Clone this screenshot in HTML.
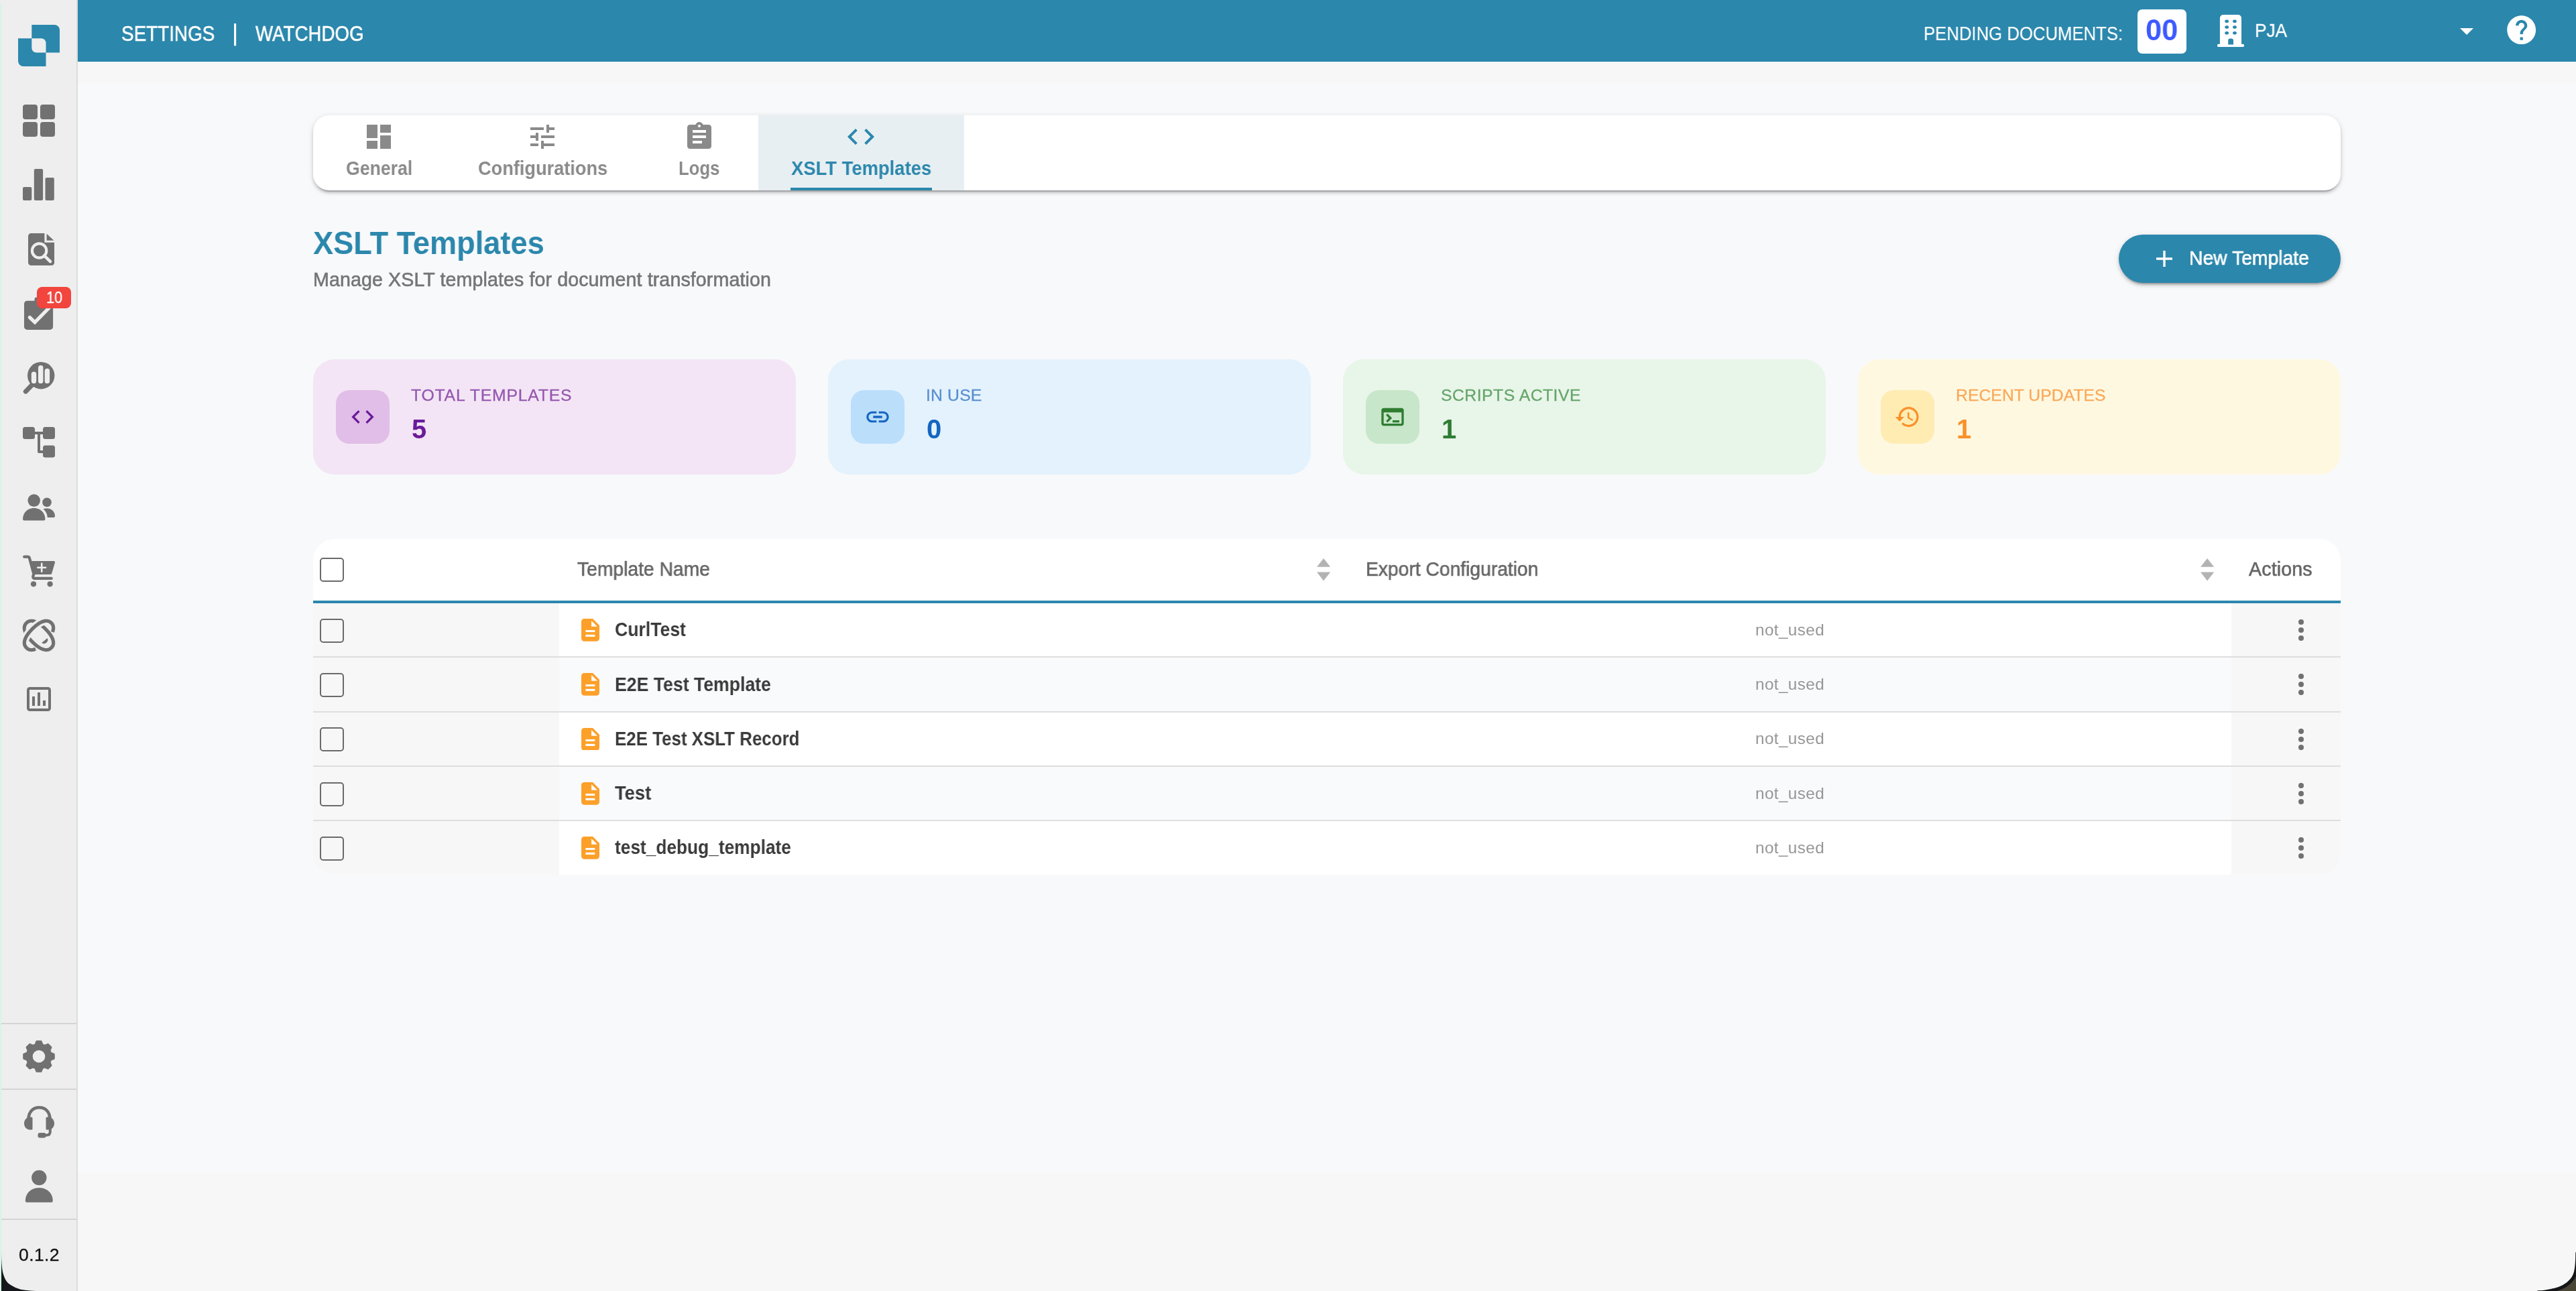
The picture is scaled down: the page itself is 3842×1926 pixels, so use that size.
<!DOCTYPE html>
<html lang="en"><head><meta charset="utf-8"><title>Watchdog - XSLT Templates</title>
<style>
html,body{margin:0;padding:0}
body{width:3842px;height:1926px;position:relative;overflow:hidden;background:#f8f9fb;
font-family:"Liberation Sans",sans-serif;}
.b{position:absolute;display:block}
.t{position:absolute;white-space:nowrap;line-height:1;will-change:transform;}
</style></head><body>

<div class="b" style="left:116px;top:1750px;width:3726px;height:176px;background:#f7f7f7"></div>
<div class="b" style="left:116px;top:92px;width:3726px;height:32px;background:#f7f7f7"></div>
<div class="b" style="left:0px;top:0px;width:116px;height:1926px;background:#eeeeee"></div>
<div class="b" style="left:114px;top:0px;width:2px;height:1926px;background:#dcdcdc"></div>
<div class="b" style="left:0px;top:5px;width:2px;height:1921px;background:#d6f5e6"></div>
<div class="b" style="left:116px;top:0px;width:3726px;height:92px;background:#2b87ac"></div>
<div class="b" style="left:116px;top:91px;width:3726px;height:1px;background:#227ea4"></div>
<div class="b" style="left:116px;top:92px;width:3726px;height:1px;background:#fcfcfc"></div>
<div class="t" style="left:181.20px;top:35px;font-size:31px;color:#fff;-webkit-text-stroke:0.55px currentColor;transform-origin:0 50%;transform:scaleX(0.8987);">SETTINGS</div>
<div class="t" style="left:345.8px;top:31px;font-size:35.2px;color:#fff;-webkit-text-stroke:0.25px currentColor;">|</div>
<div class="t" style="left:380.80px;top:35px;font-size:31px;color:#fff;-webkit-text-stroke:0.55px currentColor;transform-origin:0 50%;transform:scaleX(0.8935);">WATCHDOG</div>
<div class="t" style="left:2869.00px;top:36px;font-size:29px;color:#fff;-webkit-text-stroke:0.15px currentColor;transform-origin:0 50%;transform:scaleX(0.8868);">PENDING DOCUMENTS:</div>
<div class="b" style="left:3188px;top:14px;width:73px;height:66px;background:#fff;border-radius:7px"></div>
<div class="t" style="left:3200.00px;top:23px;font-size:44px;color:#3d5afe;font-weight:700;transform-origin:0 50%;transform:scaleX(0.9857);">00</div>
<div class="t" style="left:3363.00px;top:31px;font-size:28.5px;color:#fff;-webkit-text-stroke:0.3px currentColor;transform-origin:0 50%;transform:scaleX(0.9187);">PJA</div>
<svg class="b" style="left:3307px;top:22px;" width="40" height="48" viewBox="0 0 40 48"><path fill="#fff" d="M9 0h22a5 5 0 0 1 5 5v38.800h2a2.100 2.100 0 0 1 0 4.200h-36a2.100 2.100 0 0 1 0-4.200H3.900V5a5 5 0 0 1 5-5z"/><rect x="11.2" y="7.4" width="5.900" height="4.600" rx="2.300" fill="#2b87ac"/><rect x="11.2" y="16.2" width="5.900" height="4.600" rx="2.300" fill="#2b87ac"/><rect x="11.2" y="25" width="5.900" height="4.600" rx="2.300" fill="#2b87ac"/><rect x="23" y="7.4" width="5.900" height="4.600" rx="2.300" fill="#2b87ac"/><rect x="23" y="16.2" width="5.900" height="4.600" rx="2.300" fill="#2b87ac"/><rect x="23" y="25" width="5.900" height="4.600" rx="2.300" fill="#2b87ac"/><path fill="#2b87ac" d="M16.200 44.600v-6a3.200 3.200 0 0 1 3.200-3.200h1.400a3.200 3.200 0 0 1 3.200 3.200v6z"/></svg>
<svg class="b" style="left:3668.5px;top:41.8px;" width="20" height="10" viewBox="0 0 20 10"><path fill="#fff" d="M0 0h20L10 10z"/></svg>
<svg class="b" style="left:3734.6px;top:19.1px;" width="51.4" height="51.4" viewBox="0 0 24 24"><path fill="#fff" d="M12 2C6.48 2 2 6.48 2 12s4.48 10 10 10 10-4.48 10-10S17.52 2 12 2zm1 17h-2v-2h2v2zm2.07-7.75l-.9.92C13.45 12.9 13 13.5 13 15h-2v-.5c0-1.1.45-2.1 1.17-2.83l1.24-1.26c.37-.36.59-.86.59-1.41 0-1.1-.9-2-2-2s-2 .9-2 2H8c0-2.21 1.79-4 4-4s4 1.79 4 4c0 .88-.36 1.68-.93 2.25z"/></svg>
<svg class="b" style="left:27px;top:37px;" width="62" height="62" viewBox="0 0 62 62"><path fill="#2b87ac" d="M20.3 0H54a8 8 0 0 1 8 8v33.5H20.3z"/><path fill="#2b87ac" d="M0 20.3h41.5V62H8a8 8 0 0 1-8-8z"/><path fill="#eeeeee" d="M20.3 20.3H34.5a7 7 0 0 1 7 7v14.2H27.3a7 7 0 0 1-7-7z"/></svg>
<svg class="b" style="left:34px;top:156px;" width="48" height="48" viewBox="0 0 48 48"><rect x="0" y="0" width="22" height="22" rx="4" fill="#717171"/><rect x="0" y="26" width="22" height="22" rx="4" fill="#717171"/><rect x="26" y="0" width="22" height="22" rx="4" fill="#717171"/><rect x="26" y="26" width="22" height="22" rx="4" fill="#717171"/></svg>
<svg class="b" style="left:34px;top:252px;" width="47" height="47" viewBox="0 0 47 47"><rect x="0" y="27" width="13.3" height="20" rx="2" fill="#717171"/><rect x="16.8" y="0" width="13.3" height="47" rx="2" fill="#717171"/><rect x="33.5" y="13" width="13.3" height="34" rx="2" fill="#717171"/></svg>
<svg class="b" style="left:41.8px;top:348px;" width="39.4" height="48" viewBox="0 0 39.400 48"><path fill="#717171" d="M4.500 0H24.400V13.800H39.200V43.500a4.500 4.500 0 0 1-4.500 4.500H4.500a4.500 4.500 0 0 1-4.500-4.500V4.500a4.500 4.500 0 0 1 4.500-4.500z"/><path fill="#717171" d="M27.600 0.700L38.300 10.700H27.600z"/><circle cx="16.600" cy="26" r="10.700" fill="none" stroke="#eeeeee" stroke-width="4.200"/><path d="M24 33.400L33 42.200" stroke="#eeeeee" stroke-width="4.600" stroke-linecap="round"/></svg>
<svg class="b" style="left:36.2px;top:440px;" width="44" height="52" viewBox="0 0 44 52"><rect x="0" y="8.800" width="43.100" height="43.100" rx="4.500" fill="#717171"/><rect x="15.500" y="3.500" width="12.100" height="10" rx="3" fill="#717171"/><path d="M8.300 33.500L16 40.800L37.400 19" fill="none" stroke="#eeeeee" stroke-width="5.200" stroke-linecap="round" stroke-linejoin="miter"/></svg>
<div class="b" style="left:55px;top:428px;width:51px;height:32px;background:#f1453d;border-radius:8px"></div>
<div class="t" style="left:68.80px;top:432px;font-size:24px;color:#fff;-webkit-text-stroke:0.3px currentColor;transform-origin:0 50%;transform:scaleX(0.9047);">10</div>
<svg class="b" style="left:32px;top:538px;" width="52" height="52" viewBox="0 0 52 52"><circle cx="29.200" cy="22.200" r="20.200" fill="#717171"/><path d="M16 36L6.300 46.100" stroke="#717171" stroke-width="7" stroke-linecap="round"/><rect x="14.800" y="16.500" width="7.400" height="17.600" rx="3.700" fill="#eeeeee"/><rect x="25" y="6.900" width="7.400" height="27.200" rx="3.700" fill="#eeeeee"/><rect x="34.700" y="11.800" width="7.400" height="22.300" rx="3.700" fill="#eeeeee"/></svg>
<svg class="b" style="left:34px;top:637.4px;" width="48" height="46" viewBox="0 0 48 46"><rect x="0" y="0" width="18" height="18" rx="3.5" fill="#717171"/><rect x="30" y="0" width="18" height="18" rx="3.5" fill="#717171"/><rect x="30" y="27.6" width="18" height="18" rx="3.5" fill="#717171"/><path d="M16 9H32M24 9V37H32" fill="none" stroke="#717171" stroke-width="4" stroke-linejoin="round"/></svg>
<svg class="b" style="left:34px;top:736.5px;" width="48" height="40" viewBox="0 0 48 40"><circle cx="16.7" cy="9.6" r="9.3" fill="#717171"/><circle cx="36" cy="12.4" r="6.8" fill="#717171"/><path fill="#717171" d="M0 37.5C0 28 7 21 16.7 21S33.4 28 33.4 37.5a2 2 0 0 1-2 2H2a2 2 0 0 1-2-2z"/><path fill="#717171" d="M30.5 22.6C32 21.9 34 21.6 36 21.6C43 21.6 48 26.5 48 33a2 2 0 0 1-2 2H36.8C36.6 30 34.3 25.6 30.5 22.6z"/></svg>
<svg class="b" style="left:34px;top:828px;" width="49" height="48" viewBox="0 0 49 48"><path fill="none" stroke="#717171" stroke-width="4.200" stroke-linecap="round" stroke-linejoin="round" d="M2.200 2.700H7.600C8.800 2.700 9.600 3.400 10 4.800L16.400 28.500L15.300 31.500C14.800 33.400 15.800 34.900 17.800 34.900H42.700"/><path fill="#717171" d="M11.500 9.100H46.200C47.600 9.100 48.300 10.200 47.900 11.500L43.300 27.300C43 28.400 42.300 28.900 41.200 28.900H16.500z"/><circle cx="16" cy="43.300" r="4.100" fill="#717171"/><circle cx="40.600" cy="43.300" r="4.100" fill="#717171"/><path d="M28.200 12.900V24.700M22.300 18.800H34.100" stroke="#eeeeee" stroke-width="2.600" stroke-linecap="round"/></svg>
<svg class="b" style="left:34px;top:924px;overflow:visible;" width="48" height="48" viewBox="0 0 48 48"><path fill="#717171" d="M28.200 35.100L36.600 27.900A5.700 5.700 0 0 1 28.200 35.100z"/><path d="M42.53 42.43L41.99 42.94L41.53 43.34L41.08 43.70L40.63 44.01L40.17 44.29L39.70 44.55L39.23 44.77L38.74 44.96L38.25 45.12L37.74 45.26L37.22 45.37L36.69 45.46L36.16 45.51L35.61 45.54L35.05 45.55L34.48 45.53L33.90 45.48L33.31 45.41L32.71 45.31L32.10 45.19L31.48 45.04L30.85 44.87L30.22 44.67L29.58 44.45L28.93 44.20L28.28 43.93L27.61 43.63L26.95 43.31L26.27 42.96L25.59 42.59L24.91 42.19L24.21 41.77L23.52 41.33L22.82 40.86L22.11 40.37L21.40 39.85L20.68 39.30L19.96 38.73L19.22 38.13L18.48 37.50L17.73 36.84L16.96 36.14L16.16 35.40L15.32 34.58L14.31 33.59L13.32 32.58L12.50 31.74L11.76 30.94L11.06 30.17L10.40 29.42L9.77 28.68L9.17 27.94L8.60 27.22L8.05 26.50L7.53 25.79L7.04 25.08L6.57 24.38L6.13 23.69L5.71 22.99L5.31 22.31L4.94 21.63L4.59 20.95L4.27 20.29L3.97 19.62L3.70 18.97L3.45 18.32L3.23 17.68L3.03 17.05L2.86 16.42L2.71 15.80L2.59 15.19L2.49 14.59L2.42 14.00L2.37 13.42L2.35 12.85L2.36 12.29L2.39 11.74L2.44 11.21L2.53 10.68L2.64 10.16L2.78 9.65L2.94 9.16L3.13 8.67L3.35 8.20L3.61 7.73L3.89 7.27L4.20 6.82L4.56 6.37L4.96 5.91L5.47 5.37L6.01 4.86L6.47 4.46L6.92 4.10L7.37 3.79L7.83 3.51L8.30 3.25L8.77 3.03L9.26 2.84L9.75 2.68L10.26 2.54L10.78 2.43L11.31 2.34L11.84 2.29L12.39 2.26L12.95 2.25L13.52 2.27L14.10 2.32L14.69 2.39L15.29 2.49L15.90 2.61L16.52 2.76L17.15 2.93L17.78 3.13L18.42 3.35L19.07 3.60L19.72 3.87L20.39 4.17L21.05 4.49L21.73 4.84L22.41 5.21L23.09 5.61L23.79 6.03L24.48 6.47L25.18 6.94L25.89 7.43L26.60 7.95L27.32 8.50L28.04 9.07L28.78 9.67L29.52 10.30L30.27 10.96L31.04 11.66L31.84 12.40L32.68 13.22L33.69 14.21L34.68 15.22L35.50 16.06L36.24 16.86L36.94 17.63L37.60 18.38L38.23 19.12L38.83 19.86L39.40 20.58L39.95 21.30L40.47 22.01L40.96 22.72L41.43 23.42L41.87 24.11L42.29 24.81L42.69 25.49L43.06 26.17L43.41 26.85L43.73 27.51L44.03 28.18L44.30 28.83L44.55 29.48L44.77 30.12L44.97 30.75L45.14 31.38L45.29 32.00L45.41 32.61L45.51 33.21L45.58 33.80L45.63 34.38L45.65 34.95L45.64 35.51L45.61 36.06L45.56 36.59L45.47 37.12L45.36 37.64L45.22 38.15L45.06 38.64L44.87 39.13L44.65 39.60L44.39 40.07L44.11 40.53L43.80 40.98L43.44 41.43L43.04 41.89L42.53 42.43z" fill="none" stroke="#717171" stroke-width="5.200"/><path d="M35.61 2.26L35.22 2.25L34.83 2.25L34.44 2.27L34.04 2.30L33.63 2.35L33.23 2.40L32.81 2.47L32.40 2.55L31.97 2.64L31.55 2.74L31.12 2.86L30.69 2.98L30.25 3.12L29.81 3.27L29.36 3.43L28.92 3.61L28.47 3.79L28.01 3.99L27.55 4.20L27.09 4.42L26.63 4.65L26.17 4.90L25.70 5.15L25.23 5.42L24.75 5.70L24.28 5.99L23.80 6.29L23.32 6.60L22.83 6.93L22.35 7.27L21.86 7.62L21.37 7.98L20.87 8.35L20.38 8.74L19.88 9.14L19.37 9.55L18.86 9.97L18.35 10.41L17.83 10.87L17.30 11.34L16.77 11.84L16.22 12.35L15.65 12.90L15.04 13.49L14.31 14.21L13.59 14.94L13.00 15.55L12.45 16.12L11.94 16.67L11.44 17.20L10.97 17.73L10.51 18.25L10.07 18.76L9.65 19.27L9.24 19.78L8.84 20.28L8.45 20.77L8.08 21.27L7.72 21.76L7.37 22.25L7.03 22.73L6.70 23.22L6.39 23.70L6.09 24.18L5.80 24.65L5.52 25.13L5.25 25.60L5.00 26.07L4.75 26.53L4.52 26.99L4.30 27.45L4.09 27.91L3.89 28.37L3.71 28.82L3.53 29.26L3.37 29.71L3.22 30.15L3.08 30.59L2.96 31.02L2.84 31.45L2.74 31.87L2.65 32.30L2.57 32.71L2.50 33.13L2.45 33.53L2.40 33.94L2.37 34.34L2.35 34.73L2.35 35.12L2.36 35.51" fill="none" stroke="#eeeeee" stroke-width="12"/><path d="M44.30 18.97L44.67 17.96L44.99 16.98L45.24 16.01L45.44 15.06L45.57 14.13L45.64 13.23L45.65 12.36L45.59 11.50L45.47 10.68L45.29 9.88L45.04 9.10L44.72 8.36L44.34 7.63L43.87 6.92L43.32 6.22L42.60 5.45L41.78 4.67L41.08 4.10L40.37 3.63L39.65 3.23L38.90 2.90L38.13 2.64L37.34 2.45L36.52 2.32L35.67 2.26L34.79 2.26L33.90 2.32L32.97 2.44L32.03 2.62L31.06 2.87L30.08 3.18L29.08 3.54L28.06 3.97L27.02 4.46L25.97 5.00L24.91 5.61L23.83 6.27L22.74 6.99L21.64 7.78L20.52 8.62L19.39 9.53L18.23 10.52L17.05 11.58L15.80 12.75L14.31 14.21L12.85 15.70L11.68 16.95L10.62 18.13L9.63 19.29L8.72 20.42L7.88 21.54L7.09 22.64L6.37 23.73L5.71 24.81L5.10 25.87L4.56 26.92L4.07 27.96L3.64 28.98L3.28 29.98L2.97 30.96L2.72 31.93L2.54 32.87L2.42 33.80L2.36 34.69L2.36 35.57L2.42 36.42L2.55 37.24L2.74 38.03L3.00 38.80L3.33 39.55L3.73 40.27L4.20 40.98L4.77 41.68L5.55 42.50L6.32 43.22L7.02 43.77L7.73 44.24L8.46 44.62L9.20 44.94L9.98 45.19L10.78 45.37L11.60 45.49L12.46 45.55L13.33 45.54L14.23 45.47L15.16 45.34L16.11 45.14L17.08 44.89L18.06 44.57L19.07 44.20" fill="none" stroke="#717171" stroke-width="5.200"/></svg>
<svg class="b" style="left:40px;top:1025px;" width="36" height="36" viewBox="0 0 36 36"><rect x="0" y="0" width="36" height="36" rx="4.500" fill="#717171"/><rect x="4" y="4" width="28" height="28" fill="#eeeeee"/><rect x="8" y="14" width="4" height="14" fill="#717171"/><rect x="16" y="8" width="4" height="20" fill="#717171"/><rect x="24" y="20" width="4" height="8" fill="#717171"/></svg>
<div class="b" style="left:2px;top:1526px;width:112px;height:2px;background:#d4d4d4"></div>
<div class="b" style="left:2px;top:1624px;width:112px;height:2px;background:#d4d4d4"></div>
<div class="b" style="left:2px;top:1818px;width:112px;height:2px;background:#d4d4d4"></div>
<svg class="b" style="left:34px;top:1552px;" width="48" height="48" viewBox="0 0 48 48"><path fill="#717171" stroke="#717171" stroke-width="3" stroke-linejoin="round" d="M18.92 6.52L20.85 1.72L27.15 1.72L29.08 6.52L32.77 8.05L37.52 6.02L41.98 10.48L39.95 15.23L41.48 18.92L46.28 20.85L46.28 27.15L41.48 29.08L39.95 32.77L41.98 37.52L37.52 41.98L32.77 39.95L29.08 41.48L27.15 46.28L20.85 46.28L18.92 41.48L15.23 39.95L10.48 41.98L6.02 37.52L8.05 32.77L6.52 29.08L1.72 27.15L1.72 20.85L6.52 18.92L8.05 15.23L6.02 10.48L10.48 6.02L15.23 8.05z"/><circle cx="24" cy="24" r="9.3" fill="#eeeeee"/></svg>
<svg class="b" style="left:36px;top:1650px;" width="45" height="48" viewBox="0 0 45 48"><path fill="none" stroke="#717171" stroke-width="4.6" d="M6.5 22V20C6.5 9 13 2.3 22.5 2.3S38.5 9 38.5 20V22"/><path fill="#717171" d="M11 16.5H9C4 16.5 0 20.5 0 26S4 35.5 9 35.5H11a1.5 1.5 0 0 0 1.5-1.5V18a1.5 1.5 0 0 0-1.5-1.5z"/><path fill="#717171" d="M34 16.5h2C41 16.5 45 20.5 45 26S41 35.5 36 35.5H34a1.500 1.500 0 0 1-1.500-1.500V18a1.500 1.500 0 0 1 1.500-1.500z"/><path fill="none" stroke="#717171" stroke-width="4" d="M38.800 33V38C38.800 41.500 37 43.500 33.500 43.500H28"/><rect x="20.500" y="40" width="12" height="7.500" rx="3" fill="#717171"/></svg>
<svg class="b" style="left:37px;top:1745px;" width="43" height="50" viewBox="0 0 43 50"><circle cx="21.3" cy="12" r="11.2" fill="#717171"/><path fill="#717171" d="M0.800 46.500C0.800 35 9.500 27 21.300 27S41.800 35 41.800 46.500a2.200 2.200 0 0 1-2.200 2.200H3a2.200 2.200 0 0 1-2.200-2.200z"/></svg>
<div class="t" style="left:27.90px;top:1859px;font-size:26.5px;letter-spacing:0.400px;color:#111;-webkit-text-stroke:0.3px currentColor;">0.1.2</div>
<div class="b" style="left:467px;top:172px;width:3024px;height:112px;background:#fff;border-radius:24px;box-shadow:0 6px 2px -4px rgba(0,0,0,.2),0 4px 4px rgba(0,0,0,.14),0 2px 10px rgba(0,0,0,.12)"></div>
<div class="b" style="left:1131px;top:172px;width:307px;height:112px;background:#e8eff3"></div>
<div class="b" style="left:1179px;top:280px;width:211px;height:4px;background:#2b87ac"></div>
<svg class="b" style="left:541px;top:180px;" width="48" height="48" viewBox="0 0 24 24"><path fill="#8a8a8a" d="M3 13h8V3H3v10zm0 8h8v-6H3v6zm10 0h8V11h-8v10zm0-18v6h8V3h-8z"/></svg>
<div class="t" style="left:515.70px;top:237px;font-size:28.8px;color:#8a8a8a;font-weight:700;transform-origin:0 50%;transform:scaleX(0.9252);">General</div>
<svg class="b" style="left:785px;top:180px;" width="48" height="48" viewBox="0 0 24 24"><path fill="#8a8a8a" d="M3 17v2h6v-2H3zM3 5v2h10V5H3zm10 16v-2h8v-2h-8v-2h-2v6h2zM7 9v2H3v2h4v2h2V9H7zm14 4v-2H11v2h10zm-6-4h2V7h4V5h-4V3h-2v6z"/></svg>
<div class="t" style="left:712.50px;top:237px;font-size:28.8px;color:#8a8a8a;font-weight:700;transform-origin:0 50%;transform:scaleX(0.9433);">Configurations</div>
<svg class="b" style="left:1018.7px;top:180px;" width="48" height="48" viewBox="0 0 24 24"><path fill="#8a8a8a" d="M19 3h-4.180C14.400 1.840 13.300 1 12 1c-1.300 0-2.400.840-2.820 2H5c-1.100 0-2 .900-2 2v14c0 1.100.900 2 2 2h14c1.100 0 2-.900 2-2V5c0-1.100-.900-2-2-2zm-7 0c.550 0 1 .450 1 1s-.450 1-1 1-1-.450-1-1 .450-1 1-1zm2 14H7v-2h7v2zm3-4H7v-2h10v2zm0-4H7V7h10v2z"/></svg>
<div class="t" style="left:1012.20px;top:237px;font-size:28.8px;color:#8a8a8a;font-weight:700;transform-origin:0 50%;transform:scaleX(0.8916);">Logs</div>
<svg class="b" style="left:1260.3px;top:180px;" width="48" height="48" viewBox="0 0 24 24"><path fill="#2b87ac" d="M9.400 16.600L4.800 12l4.600-4.600L8 6l-6 6 6 6 1.400-1.400zm5.200 0l4.600-4.600-4.600-4.600L16 6l6 6-6 6-1.400-1.400z"/></svg>
<div class="t" style="left:1179.50px;top:237px;font-size:28.8px;color:#2b87ac;font-weight:700;transform-origin:0 50%;transform:scaleX(0.9517);">XSLT Templates</div>
<div class="t" style="left:467.30px;top:338px;font-size:49px;color:#2b87ac;font-weight:700;transform-origin:0 50%;transform:scaleX(0.9217);">XSLT Templates</div>
<div class="t" style="left:467.20px;top:403px;font-size:28.6px;letter-spacing:0.110px;color:#757575;-webkit-text-stroke:0.6px currentColor;">Manage XSLT templates for document transformation</div>
<div class="b" style="left:3160px;top:350px;width:331px;height:72px;background:#2b87ac;border-radius:36px;box-shadow:0 6px 2px -4px rgba(0,0,0,.2),0 4px 4px rgba(0,0,0,.14),0 2px 10px rgba(0,0,0,.12)"></div>
<svg class="b" style="left:3216px;top:374px;" width="24" height="24" viewBox="0 0 24 24"><path d="M12 0V24M0 12H24" stroke="#fff" stroke-width="3.4"/></svg>
<div class="t" style="left:3264.80px;top:371px;font-size:28.6px;color:#fff;-webkit-text-stroke:0.6px currentColor;transform-origin:0 50%;transform:scaleX(0.9900);">New Template</div>
<div class="b" style="left:467px;top:536px;width:720px;height:172px;background:#f3e5f5;border-radius:32px"></div>
<div class="b" style="left:501px;top:582px;width:80px;height:80px;background:#e1bee7;border-radius:20px"></div>
<svg class="b" style="left:521px;top:602px;" width="40" height="40" viewBox="0 0 24 24"><path fill="#6a1b9a" d="M9.400 16.600L4.800 12l4.600-4.600L8 6l-6 6 6 6 1.400-1.400zm5.200 0l4.600-4.600-4.600-4.600L16 6l6 6-6 6-1.400-1.400z"/></svg>
<div class="t" style="left:613.30px;top:578px;font-size:24.8px;letter-spacing:0.775px;color:#9557b0;-webkit-text-stroke:0.3px currentColor;">TOTAL TEMPLATES</div>
<div class="t" style="left:613.50px;top:620px;font-size:40px;letter-spacing:0.000px;color:#6a1b9a;font-weight:700;">5</div>
<div class="b" style="left:1235px;top:536px;width:720px;height:172px;background:#e3f2fd;border-radius:32px"></div>
<div class="b" style="left:1269px;top:582px;width:80px;height:80px;background:#bbdefb;border-radius:20px"></div>
<svg class="b" style="left:1289px;top:602px;" width="40" height="40" viewBox="0 0 24 24"><path fill="#1565c0" d="M3.900 12c0-1.710 1.390-3.100 3.100-3.100h4V7H7c-2.760 0-5 2.240-5 5s2.240 5 5 5h4v-1.900H7c-1.710 0-3.100-1.390-3.100-3.100zM8 13h8v-2H8v2zm9-6h-4v1.900h4c1.710 0 3.100 1.390 3.100 3.100s-1.390 3.100-3.100 3.100h-4V17h4c2.760 0 5-2.240 5-5s-2.240-5-5-5z"/></svg>
<div class="t" style="left:1381.30px;top:578px;font-size:24.8px;letter-spacing:0.140px;color:#5b8fd0;-webkit-text-stroke:0.3px currentColor;">IN USE</div>
<div class="t" style="left:1381.50px;top:620px;font-size:40px;letter-spacing:0.000px;color:#1565c0;font-weight:700;">0</div>
<div class="b" style="left:2003px;top:536px;width:720px;height:172px;background:#e8f5e9;border-radius:32px"></div>
<div class="b" style="left:2037px;top:582px;width:80px;height:80px;background:#c8e6c9;border-radius:20px"></div>
<svg class="b" style="left:2057px;top:602px;" width="40" height="40" viewBox="0 0 24 24"><path fill="#2e7d32" d="M20 4H4c-1.110 0-2 .900-2 2v12c0 1.100.890 2 2 2h16c1.100 0 2-.900 2-2V6c0-1.100-.890-2-2-2zm0 14H4V8h16v10zm-2-1h-6v-2h6v2zM7.500 17l-1.410-1.410L8.670 13l-2.590-2.590L7.500 9l4 4-4 4z"/></svg>
<div class="t" style="left:2149.30px;top:578px;font-size:24.8px;letter-spacing:0.458px;color:#66a56a;-webkit-text-stroke:0.3px currentColor;">SCRIPTS ACTIVE</div>
<div class="t" style="left:2149.50px;top:620px;font-size:40px;letter-spacing:0.000px;color:#2e7d32;font-weight:700;">1</div>
<div class="b" style="left:2771px;top:536px;width:720px;height:172px;background:#fff8e1;border-radius:32px"></div>
<div class="b" style="left:2805px;top:582px;width:80px;height:80px;background:#ffecb3;border-radius:20px"></div>
<svg class="b" style="left:2825px;top:602px;" width="40" height="40" viewBox="0 0 24 24"><path fill="#f9912a" d="M13 3c-4.970 0-9 4.030-9 9H1l3.890 3.890.070.140L9 12H6c0-3.870 3.130-7 7-7s7 3.130 7 7-3.130 7-7 7c-1.930 0-3.680-.790-4.940-2.060l-1.420 1.420C8.270 19.990 10.510 21 13 21c4.970 0 9-4.030 9-9s-4.030-9-9-9zm-1 5v5l4.280 2.540.720-1.210-3.500-2.080V8H12z"/></svg>
<div class="t" style="left:2917.30px;top:578px;font-size:24.8px;letter-spacing:-0.004px;color:#f9a95a;-webkit-text-stroke:0.3px currentColor;">RECENT UPDATES</div>
<div class="t" style="left:2917.50px;top:620px;font-size:40px;letter-spacing:0.000px;color:#f9912a;font-weight:700;">1</div>
<div class="b" style="left:467px;top:804px;width:3024px;height:500.50px;background:#fff;border-radius:32px;overflow:hidden"><div class="b" style="left:0px;top:92px;width:3024px;height:4px;background:#2b87ac"></div><div class="b" style="left:367px;top:96.00px;width:2494px;height:81.25px;background:#ffffff"></div><div class="b" style="left:0px;top:96.00px;width:367px;height:81.25px;background:#f7f7f7"></div><div class="b" style="left:2861px;top:96.00px;width:163px;height:81.25px;background:#f7f7f7"></div><div class="b" style="left:0px;top:175.25px;width:3024px;height:2px;background:#dedede"></div><div class="b" style="left:367px;top:177.25px;width:2494px;height:81.25px;background:#f9fafc"></div><div class="b" style="left:0px;top:177.25px;width:367px;height:81.25px;background:#f7f7f7"></div><div class="b" style="left:2861px;top:177.25px;width:163px;height:81.25px;background:#f7f7f7"></div><div class="b" style="left:0px;top:256.50px;width:3024px;height:2px;background:#dedede"></div><div class="b" style="left:367px;top:258.50px;width:2494px;height:81.25px;background:#ffffff"></div><div class="b" style="left:0px;top:258.50px;width:367px;height:81.25px;background:#f7f7f7"></div><div class="b" style="left:2861px;top:258.50px;width:163px;height:81.25px;background:#f7f7f7"></div><div class="b" style="left:0px;top:337.75px;width:3024px;height:2px;background:#dedede"></div><div class="b" style="left:367px;top:339.75px;width:2494px;height:81.25px;background:#f9fafc"></div><div class="b" style="left:0px;top:339.75px;width:367px;height:81.25px;background:#f7f7f7"></div><div class="b" style="left:2861px;top:339.75px;width:163px;height:81.25px;background:#f7f7f7"></div><div class="b" style="left:0px;top:419.00px;width:3024px;height:2px;background:#dedede"></div><div class="b" style="left:367px;top:421.00px;width:2494px;height:81.25px;background:#ffffff"></div><div class="b" style="left:0px;top:421.00px;width:367px;height:81.25px;background:#f7f7f7"></div><div class="b" style="left:2861px;top:421.00px;width:163px;height:81.25px;background:#f7f7f7"></div></div>
<div class="b" style="left:477.3px;top:832px;width:32px;height:32px;border:2px solid #6a6a6a;border-radius:5px;background:transparent"></div>
<div class="t" style="left:860.80px;top:835px;font-size:28.6px;color:#666666;-webkit-text-stroke:0.6px currentColor;transform-origin:0 50%;transform:scaleX(0.9885);">Template Name</div>
<div class="t" style="left:2037.30px;top:835px;font-size:28.6px;color:#666666;-webkit-text-stroke:0.6px currentColor;transform-origin:0 50%;transform:scaleX(0.9875);">Export Configuration</div>
<div class="t" style="left:3354.30px;top:835px;font-size:28.6px;letter-spacing:0.150px;color:#666666;-webkit-text-stroke:0.6px currentColor;">Actions</div>
<svg class="b" style="left:1963.7px;top:833.4px;" width="20.2" height="33.4" viewBox="0 0 20.2 33.4"><path fill="#b3b3b3" d="M10.100 0L20.200 12.700H0zM0 20.400H20.200L10.100 33.400z"/></svg>
<svg class="b" style="left:3281.8px;top:833.4px;" width="20.2" height="33.4" viewBox="0 0 20.2 33.4"><path fill="#b3b3b3" d="M10.100 0L20.200 12.700H0zM0 20.400H20.200L10.100 33.400z"/></svg>
<div class="b" style="left:477.3px;top:923px;width:32px;height:32px;border:2px solid #6a6a6a;border-radius:5px;background:transparent"></div>
<svg class="b" style="left:866.7px;top:923.1px;" width="27" height="33.8" viewBox="0 0 27 33.800"><path fill="#fca02a" d="M4.500 0H17.100L27 10V29.300a4.500 4.500 0 0 1-4.500 4.500H4.500a4.500 4.500 0 0 1-4.500-4.500V4.500a4.500 4.500 0 0 1 4.500-4.500z"/><path fill="#fff" d="M15.100 3V11.800H23.900z"/><rect x="6.400" y="17" width="13.900" height="3" fill="#fff"/><rect x="6.400" y="23.800" width="13.900" height="3.100" fill="#fff"/></svg>
<div class="t" style="left:916.70px;top:925px;font-size:28.6px;color:#3a3a3a;font-weight:700;transform-origin:0 50%;transform:scaleX(0.9304);">CurlTest</div>
<div class="t" style="left:2617.50px;top:928px;font-size:24.3px;letter-spacing:0.393px;color:#969696;">not_used</div>
<div class="b" style="left:3428px;top:924.0px;width:8px;height:8px;background:#717171;border-radius:50%"></div>
<div class="b" style="left:3428px;top:936.0px;width:8px;height:8px;background:#717171;border-radius:50%"></div>
<div class="b" style="left:3428px;top:948.0px;width:8px;height:8px;background:#717171;border-radius:50%"></div>
<div class="b" style="left:477.3px;top:1004px;width:32px;height:32px;border:2px solid #6a6a6a;border-radius:5px;background:transparent"></div>
<svg class="b" style="left:866.7px;top:1004.4px;" width="27" height="33.8" viewBox="0 0 27 33.800"><path fill="#fca02a" d="M4.500 0H17.100L27 10V29.300a4.500 4.500 0 0 1-4.500 4.500H4.500a4.500 4.500 0 0 1-4.500-4.500V4.500a4.500 4.500 0 0 1 4.500-4.500z"/><path fill="#fff" d="M15.100 3V11.800H23.900z"/><rect x="6.400" y="17" width="13.900" height="3" fill="#fff"/><rect x="6.400" y="23.800" width="13.900" height="3.100" fill="#fff"/></svg>
<div class="t" style="left:916.70px;top:1007px;font-size:28.6px;color:#3a3a3a;font-weight:700;transform-origin:0 50%;transform:scaleX(0.9316);">E2E Test Template</div>
<div class="t" style="left:2617.50px;top:1009px;font-size:24.3px;letter-spacing:0.393px;color:#969696;">not_used</div>
<div class="b" style="left:3428px;top:1005.3px;width:8px;height:8px;background:#717171;border-radius:50%"></div>
<div class="b" style="left:3428px;top:1017.3px;width:8px;height:8px;background:#717171;border-radius:50%"></div>
<div class="b" style="left:3428px;top:1029.3px;width:8px;height:8px;background:#717171;border-radius:50%"></div>
<div class="b" style="left:477.3px;top:1085px;width:32px;height:32px;border:2px solid #6a6a6a;border-radius:5px;background:transparent"></div>
<svg class="b" style="left:866.7px;top:1085.6px;" width="27" height="33.8" viewBox="0 0 27 33.800"><path fill="#fca02a" d="M4.500 0H17.100L27 10V29.300a4.500 4.500 0 0 1-4.500 4.500H4.500a4.500 4.500 0 0 1-4.500-4.500V4.500a4.500 4.500 0 0 1 4.500-4.500z"/><path fill="#fff" d="M15.100 3V11.800H23.900z"/><rect x="6.400" y="17" width="13.900" height="3" fill="#fff"/><rect x="6.400" y="23.800" width="13.900" height="3.100" fill="#fff"/></svg>
<div class="t" style="left:916.70px;top:1088px;font-size:28.6px;color:#3a3a3a;font-weight:700;transform-origin:0 50%;transform:scaleX(0.9059);">E2E Test XSLT Record</div>
<div class="t" style="left:2617.50px;top:1090px;font-size:24.3px;letter-spacing:0.393px;color:#969696;">not_used</div>
<div class="b" style="left:3428px;top:1086.5px;width:8px;height:8px;background:#717171;border-radius:50%"></div>
<div class="b" style="left:3428px;top:1098.5px;width:8px;height:8px;background:#717171;border-radius:50%"></div>
<div class="b" style="left:3428px;top:1110.5px;width:8px;height:8px;background:#717171;border-radius:50%"></div>
<div class="b" style="left:477.3px;top:1167px;width:32px;height:32px;border:2px solid #6a6a6a;border-radius:5px;background:transparent"></div>
<svg class="b" style="left:866.7px;top:1166.9px;" width="27" height="33.8" viewBox="0 0 27 33.800"><path fill="#fca02a" d="M4.500 0H17.100L27 10V29.300a4.500 4.500 0 0 1-4.500 4.500H4.500a4.500 4.500 0 0 1-4.500-4.500V4.500a4.500 4.500 0 0 1 4.500-4.500z"/><path fill="#fff" d="M15.100 3V11.800H23.900z"/><rect x="6.400" y="17" width="13.900" height="3" fill="#fff"/><rect x="6.400" y="23.800" width="13.900" height="3.100" fill="#fff"/></svg>
<div class="t" style="left:916.70px;top:1169px;font-size:28.6px;color:#3a3a3a;font-weight:700;transform-origin:0 50%;transform:scaleX(0.9558);">Test</div>
<div class="t" style="left:2617.50px;top:1172px;font-size:24.3px;letter-spacing:0.393px;color:#969696;">not_used</div>
<div class="b" style="left:3428px;top:1167.8px;width:8px;height:8px;background:#717171;border-radius:50%"></div>
<div class="b" style="left:3428px;top:1179.8px;width:8px;height:8px;background:#717171;border-radius:50%"></div>
<div class="b" style="left:3428px;top:1191.8px;width:8px;height:8px;background:#717171;border-radius:50%"></div>
<div class="b" style="left:477.3px;top:1248px;width:32px;height:32px;border:2px solid #6a6a6a;border-radius:5px;background:transparent"></div>
<svg class="b" style="left:866.7px;top:1248.1px;" width="27" height="33.8" viewBox="0 0 27 33.800"><path fill="#fca02a" d="M4.500 0H17.100L27 10V29.300a4.500 4.500 0 0 1-4.500 4.500H4.500a4.500 4.500 0 0 1-4.500-4.500V4.500a4.500 4.500 0 0 1 4.500-4.500z"/><path fill="#fff" d="M15.100 3V11.800H23.900z"/><rect x="6.400" y="17" width="13.900" height="3" fill="#fff"/><rect x="6.400" y="23.800" width="13.900" height="3.100" fill="#fff"/></svg>
<div class="t" style="left:916.70px;top:1250px;font-size:28.6px;color:#3a3a3a;font-weight:700;transform-origin:0 50%;transform:scaleX(0.9193);">test_debug_template</div>
<div class="t" style="left:2617.50px;top:1253px;font-size:24.3px;letter-spacing:0.393px;color:#969696;">not_used</div>
<div class="b" style="left:3428px;top:1249.0px;width:8px;height:8px;background:#717171;border-radius:50%"></div>
<div class="b" style="left:3428px;top:1261.0px;width:8px;height:8px;background:#717171;border-radius:50%"></div>
<div class="b" style="left:3428px;top:1273.0px;width:8px;height:8px;background:#717171;border-radius:50%"></div>
<svg class="b" style="left:0px;top:1860px;" width="70" height="66" viewBox="0 0 70 66"><path fill="#15171a" d="M2 6C2 25 3 36 5.800 43.500C8 50 11 54 15.500 56.700C20 59.500 25 62 31 63.700C40 65.500 50 66 62 66H2z"/></svg>
<svg class="b" style="left:3772px;top:1860px;" width="70" height="66" viewBox="0 0 70 66"><path fill="#4a4636" d="M70 6.500C70 20 69.500 28 67.800 35.600C66.500 41 64.500 45 61.600 48C58 52.500 54 55.500 49 58C45 60 41 61.500 36.800 62.300C28 64.500 20 66 10.700 66H70z"/><path fill="none" stroke="#15171a" stroke-width="5" d="M70 6.500C70 20 69.500 28 67.800 35.600C66.500 41 64.500 45 61.600 48C58 52.500 54 55.500 49 58C45 60 41 61.500 36.800 62.300C28 64.500 20 66 10.700 66" transform="translate(1.800 1.800)"/></svg>
</body></html>
